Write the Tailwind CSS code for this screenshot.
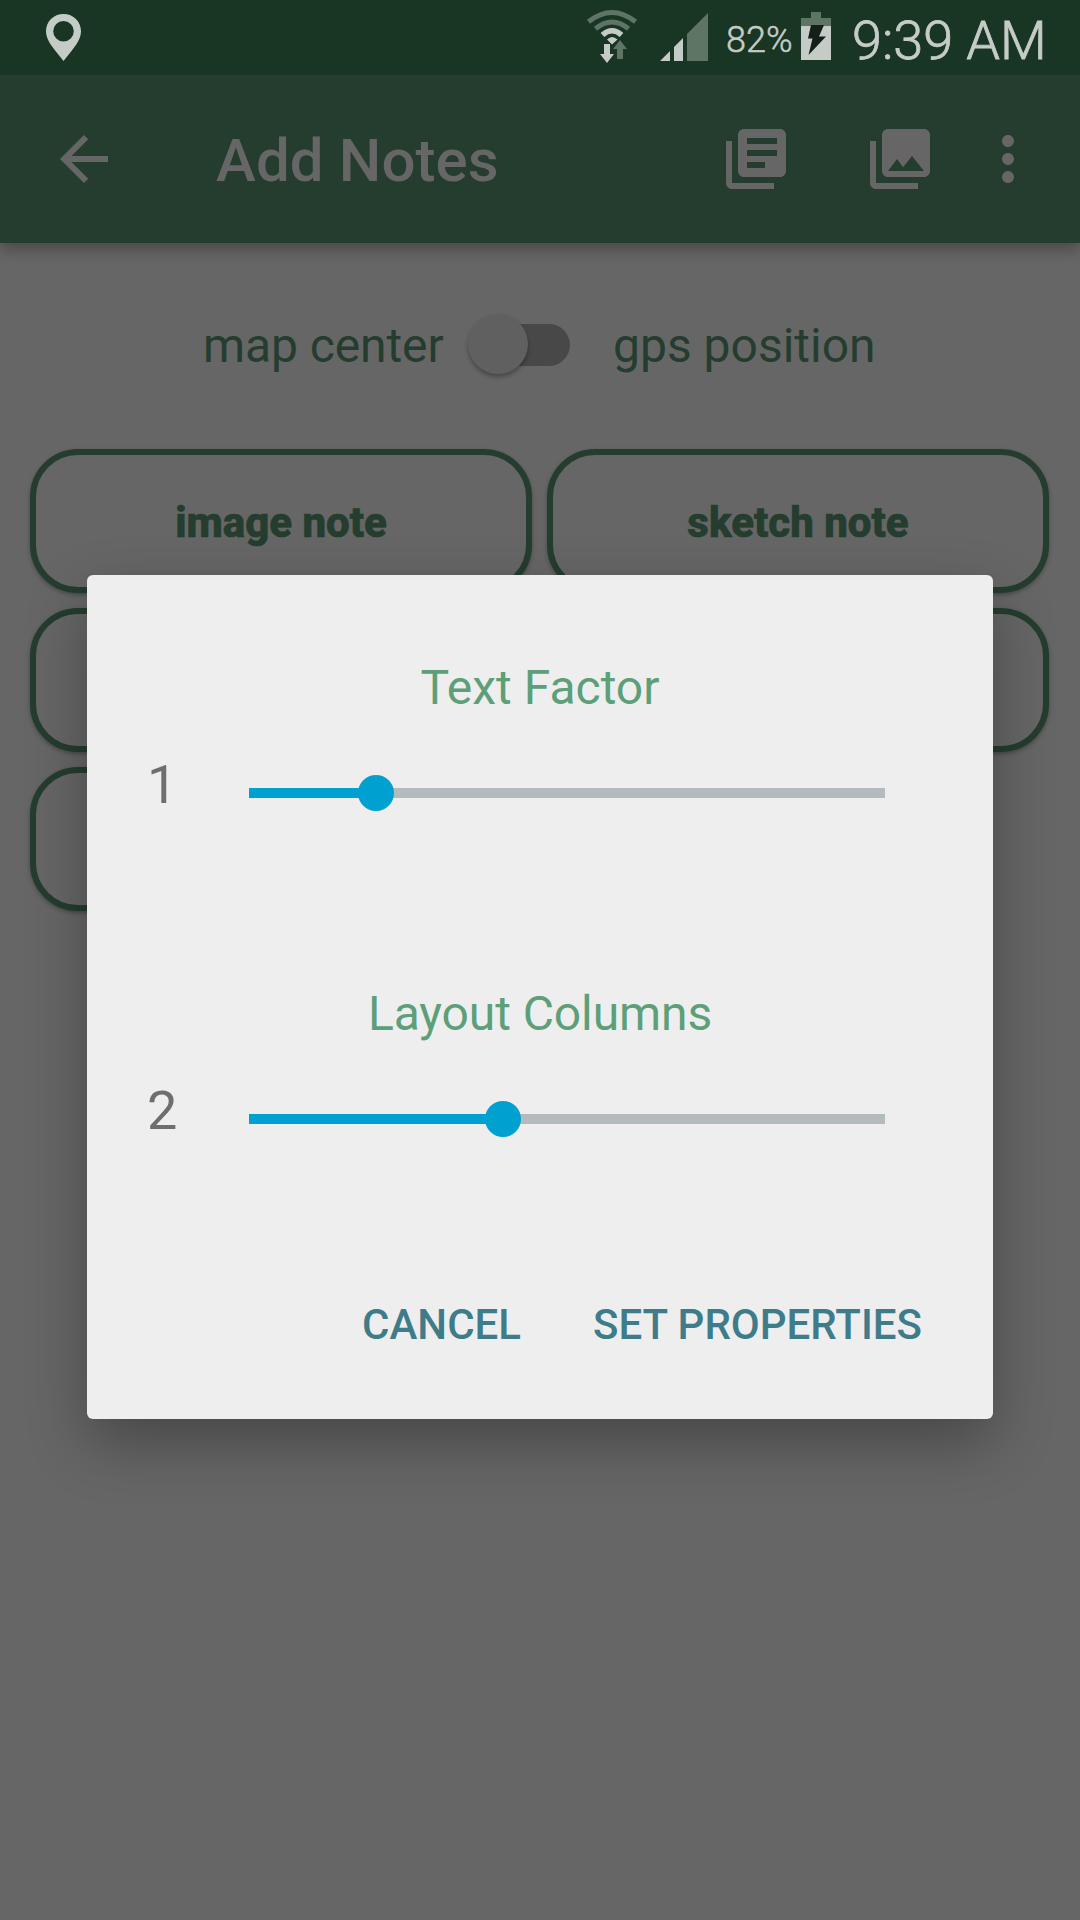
<!DOCTYPE html>
<html lang="en">
<head>
<meta charset="utf-8">
<title>Add Notes</title>
<script src="https://cdn.jsdelivr.net/npm/@tailwindcss/browser@4"></script>
</head>
<body class="relative h-[1920px] w-[1080px] overflow-hidden bg-[#666666] font-['Roboto',sans-serif]">
<div class="relative z-10 flex h-[75px] items-start bg-[#193524] text-[#c5ccc7]">
  <svg class="ml-[46px] mt-[14px] h-[47px] w-[35px] shrink-0" viewBox="0 0 35 47" fill="#c5ccc7"><path fill-rule="evenodd" d="M17.500 0C7.500 0 0 7.500 0 17.200C0 25 5 31 9.500 37L17.500 47L25.500 37C30 31 35 25 35 17.200C35 7.500 27.500 0 17.500 0ZM17.500 7A10.300 10.300 0 1 1 17.500 27.600A10.300 10.300 0 1 1 17.500 7Z"/></svg>
  <svg class="ml-[505px] h-[75px] w-[54px] shrink-0" viewBox="586 0 54 75" fill="none">
    <path stroke="#5e7465" stroke-width="5" d="M588.500 21.800Q612 3.200 635.500 21.800M595.500 28.800Q612 15.200 628.500 28.800"/>
    <path stroke="#c5ccc7" stroke-width="5.500" d="M602.500 35Q612 26.500 621.500 35"/>
    <path fill="#c5ccc7" d="M607 39.500Q612 34.500 617.500 39.500L612 44.500ZM604 44h6v10h4l-7 9l-7-9h4Z"/>
    <path fill="#5e7465" d="M617 59v-10h-4l7-9l7 9h-4v10Z"/>
  </svg>
  <svg class="ml-[20px] mt-[13px] h-[48px] w-[48px] shrink-0" viewBox="0 0 48 48"><path fill="#c5ccc7" d="M0 48L10 38V48ZM14 48V34L23 25V48Z"/><path fill="#5e7465" d="M27 48V21L48 0V48Z"/></svg>
  <span class="ml-[18px] mt-[20px] w-[75px] shrink-0 whitespace-nowrap text-[36px] font-light leading-[40px] [-webkit-text-stroke:0.5px_#c5ccc7]">82%</span>
  <svg class="mt-[12px] h-[48px] w-[30px] shrink-0" viewBox="0 0 30 48"><path fill="#5e7465" d="M0 6h10V0h10v6h10v8H0Z"/><path fill="#c5ccc7" d="M0 14h30v34H0Z"/><path fill="#131f18" d="M10 13h13l-5 11.500h7L7.500 43l4-16.500H7Z"/></svg>
  <span class="ml-[21px] mt-[10px] whitespace-nowrap text-[54px] font-light leading-[61px] [-webkit-text-stroke:0.8px_#c5ccc7]">9:39 AM</span>
</div>
<header class="relative flex h-[168px] items-center bg-[#243d2e] pl-[48px] pr-[36px] text-[#666666] shadow-[0_6px_14px_rgba(0,0,0,0.3)]">
  <svg class="size-[72px]" viewBox="0 0 24 24" fill="currentColor"><path d="M20 11H7.830l5.590-5.590L12 4l-8 8 8 8 1.410-1.410L7.830 13H20v-2z"/></svg>
  <h1 class="ml-24 flex-1 pt-[4px] text-[60px] font-medium leading-[72px] tracking-[0.1px]">Add Notes</h1>
  <svg class="size-[72px]" viewBox="0 0 24 24" fill="currentColor"><path d="M4 6H2v14c0 1.100.9 2 2 2h14v-2H4V6zm16-4H8c-1.100 0-2 .9-2 2v12c0 1.100.9 2 2 2h12c1.100 0 2-.9 2-2V4c0-1.100-.9-2-2-2zm-1 5H9V5h10v2zm-4 8H9v-2h6v2zm4-4H9V9h10v2z"/></svg>
  <svg class="ml-[72px] size-[72px]" viewBox="0 0 24 24" fill="currentColor"><path d="M22 16V4c0-1.100-.9-2-2-2H8c-1.100 0-2 .9-2 2v12c0 1.100.9 2 2 2h12c1.100 0 2-.9 2-2zm-11-4l2.030 2.710L16 11l4 5H8l3-4zM2 6v14c0 1.100.9 2 2 2h14v-2H4V6H2z"/></svg>
  <svg class="ml-[36px] size-[72px]" viewBox="0 0 24 24" fill="currentColor"><path d="M12 8c1.100 0 2-.9 2-2s-.9-2-2-2-2 .9-2 2 .9 2 2 2zm0 2c-1.100 0-2 .9-2 2s.9 2 2 2 2-.9 2-2-.9-2-2-2zm0 6c-1.100 0-2 .9-2 2s.9 2 2 2 2-.9 2-2-.9-2-2-2z"/></svg>
</header>
<main class="text-[#243d2e]">
  <div class="flex h-[206px] items-center pl-[203px]">
    <span class="w-[265px] whitespace-nowrap text-[48px] tracking-[-0.1px]">map center</span>
    <div class="mb-[5px] flex h-[60px] w-[102px] items-center">
      <div class="z-10 mt-px size-[60px] shrink-0 rounded-full bg-[#606060] shadow-[0_3px_4px_rgba(0,0,0,0.3)]"></div>
      <div class="-ml-[39px] mt-[2px] h-[42px] w-[81px] rounded-r-full bg-[#484848]"></div>
    </div>
    <span class="ml-[43px] whitespace-nowrap text-[48px]">gps position</span>
  </div>
  <div class="grid grid-cols-2 gap-[15px] pl-[30px] pr-[31px] text-[42px] font-extrabold">
    <button class="h-[144px] rounded-[48px] border-6 border-[#243d2e] bg-[#666666] pt-[3px] shadow-[0_2px_4px_rgba(0,0,0,0.3)] [-webkit-text-stroke:0.7px_#243d2e]">image note</button>
    <button class="h-[144px] rounded-[48px] border-6 border-[#243d2e] bg-[#666666] pt-[3px] shadow-[0_2px_4px_rgba(0,0,0,0.3)] [-webkit-text-stroke:0.7px_#243d2e]">sketch note</button>
    <button class="h-[144px] rounded-[48px] border-6 border-[#243d2e] bg-[#666666] shadow-[0_2px_4px_rgba(0,0,0,0.3)]"></button>
    <button class="h-[144px] rounded-[48px] border-6 border-[#243d2e] bg-[#666666] shadow-[0_2px_4px_rgba(0,0,0,0.3)]"></button>
    <button class="h-[144px] rounded-[48px] border-6 border-[#243d2e] bg-[#666666] shadow-[0_2px_4px_rgba(0,0,0,0.3)]"></button>
  </div>
</main>
<div class="absolute inset-0 z-20 flex items-start justify-center pt-[575px]">
  <section class="h-[844px] w-[906px] rounded-[6px] bg-[#eeeeee] pt-[83px] shadow-[0_24px_60px_rgba(0,0,0,0.3)]">
    <div class="h-[326px]">
      <h2 class="text-center text-[48px] leading-[60px] text-[#5d9f78]">Text Factor</h2>
      <div class="mt-[37px] flex h-[60px] items-center pl-[60px]">
        <span class="w-[102px] text-[54px] leading-[60px] text-[#6e6e6e]">1</span>
        <div class="relative mt-[16px] h-[10px] w-[636px] bg-[#b3bbbf]">
          <div class="h-full bg-[#00a0d0]" style="width:20%"></div>
          <div class="absolute -top-[13px] size-[36px] -translate-x-1/2 rounded-full bg-[#00a0d0]" style="left:20%"></div>
        </div>
      </div>
    </div>
    <div class="h-[326px]">
      <h2 class="text-center text-[48px] leading-[60px] tracking-[-0.1px] text-[#5d9f78]">Layout Columns</h2>
      <div class="mt-[37px] flex h-[60px] items-center pl-[60px]">
        <span class="w-[102px] text-[54px] leading-[60px] text-[#6e6e6e]">2</span>
        <div class="relative mt-[16px] h-[10px] w-[636px] bg-[#b3bbbf]">
          <div class="h-full bg-[#00a0d0]" style="width:40%"></div>
          <div class="absolute -top-[13px] size-[36px] -translate-x-1/2 rounded-full bg-[#00a0d0]" style="left:40%"></div>
        </div>
      </div>
    </div>
    <div class="-mt-[15px] flex justify-end gap-[72px] pr-[71px] text-[42px] font-medium leading-[60px] text-[#3f7c8a]">
      <button>CANCEL</button>
      <button>SET PROPERTIES</button>
    </div>
  </section>
</div>
</body>
</html>
